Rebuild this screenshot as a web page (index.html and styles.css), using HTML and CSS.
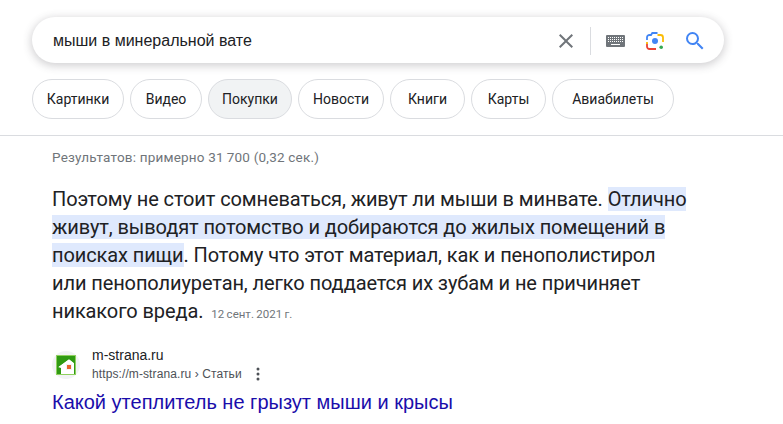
FILE: index.html
```html
<!DOCTYPE html>
<html lang="ru">
<head>
<meta charset="utf-8">
<title>мыши в минеральной вате</title>
<link rel="stylesheet" href="styles.css">
</head>
<body>
<header class="header">
  <div class="search">
    <span class="query">мыши в минеральной вате</span>
    <div class="tools">
      <svg class="clear" width="24" height="24" viewBox="0 0 24 24"><path fill="#70757a" d="M19 6.41 17.59 5 12 10.59 6.41 5 5 6.41 10.59 12 5 17.59 6.41 19 12 13.41 17.59 19 19 17.59 13.41 12z"/></svg>
      <span class="divider"></span>
      <svg class="keyboard" width="19" height="12" viewBox="0 0 19 12"><rect width="19" height="12" fill="#70757a" rx="1"/><path stroke="#fff" stroke-width="1" stroke-dasharray="1 1" d="M2 2.5h15M2 4.5h15M2 6.5h15"/><path stroke="#fff" d="M5 9.5h9"/></svg>
      <svg class="lens" width="18" height="18" viewBox="0 0 18 18"><circle cx="9" cy="9" r="3" fill="#4285f4"/><circle cx="15.2" cy="15.2" r="1.8" fill="#34a853"/><path fill="none" stroke="#4285f4" stroke-width="1.8" d="M1 8V5.500A2.500 2.500 0 0 1 3.500 3H5L6.300 1h5.200"/><path fill="none" stroke="#fbbc04" stroke-width="1.8" d="M11.500 3h3A2.500 2.500 0 0 1 17 5.500V10"/><path fill="none" stroke="#ea4335" stroke-width="1.8" d="M1 11.500V14.500A2.500 2.500 0 0 0 3.500 17H10"/><path fill="none" stroke="#fbbc04" stroke-width="1.8" d="M1 10v2"/></svg>
      <svg class="magnifier" width="24" height="24" viewBox="0 0 24 24"><path fill="#4285f4" d="M15.500 14h-.79l-.28-.27A6.470 6.470 0 0 0 16 9.500 6.500 6.500 0 1 0 9.500 16c1.610 0 3.090-.59 4.230-1.570l.27.28v.79l5 4.990L20.490 19l-4.990-5zm-6 0C7.010 14 5 11.990 5 9.500S7.010 5 9.500 5 14 7.010 14 9.500 11.990 14 9.500 14z"/></svg>
    </div>
  </div>
  <nav class="chips">
    <a class="chip chip-kartinki">Картинки</a>
    <a class="chip chip-video">Видео</a>
    <a class="chip chip-active">Покупки</a>
    <a class="chip chip-news">Новости</a>
    <a class="chip chip-books">Книги</a>
    <a class="chip chip-maps">Карты</a>
    <a class="chip chip-flights">Авиабилеты</a>
  </nav>
</header>
<main class="main">
  <p class="stats">Результатов: примерно 31&#8201;700 (0,32 сек.)</p>
  <p class="snippet">Поэтому не стоит сомневаться, живут ли мыши в минвате. <mark class="hl">Отлично живут, выводят потомство и добираются до жилых помещений в поисках пищи</mark>. Потому что этот материал, как и пенополистирол или пенополиуретан, легко поддается их зубам и не причиняет никакого вреда.<span class="date">12 сент. 2021&#8201;г.</span></p>
  <div class="source">
    <span class="favicon"><svg width="20" height="20" viewBox="0 0 20 20"><rect width="20" height="20" fill="#8fd05f"/><rect x="1" y="1" width="18" height="18" fill="#2f9a12"/><path fill="#fff" d="M2 12 13 4l5 4v11H5v-6z"/><path fill="#2f9a12" d="M2 12 13 4l6 4.500v-1L13 3 2 10.500z"/><rect x="10" y="9" width="6" height="6" fill="#f2f2f2"/><rect x="11" y="10" width="4" height="4" fill="#e8622c"/></svg></span>
    <div class="site">
      <div class="site-name">m-strana.ru</div>
      <div class="site-url"><span>https://m-strana.ru</span><span class="crumb"> › Статьи</span>
        <svg class="more" width="4" height="14" viewBox="0 0 4 14"><circle cx="2" cy="2" r="1.500"/><circle cx="2" cy="7" r="1.500"/><circle cx="2" cy="12" r="1.500"/></svg>
      </div>
    </div>
  </div>
  <a class="title">Какой утеплитель не грызут мыши и крысы</a>
</main>
</body>
</html>
```

FILE: styles.css
```css
html, body { margin: 0; padding: 0; background: #fff; overflow: hidden; }
body { width: 783px; height: 424px; font-family: Roboto, "Liberation Sans", sans-serif; color: #202124; }
.header { padding: 17px 0 0 32px; height: 118px; border-bottom: 1px solid #dadce0; }
.search { width: 692px; height: 46px; box-sizing: border-box; padding: 1px 17px 0 21px; border-radius: 24px; background: #fff; box-shadow: 0 2px 8px 1px rgba(64,60,67,.24); display: flex; align-items: center; justify-content: space-between; }
.query { font-size: 16px; font-family: "Liberation Sans", Arial, sans-serif; color: #202124; }
.tools { display: flex; align-items: center; }
.clear { margin-right: 12px; }
.divider { width: 1px; height: 28px; background: #dadce0; margin-right: 15px; }
.keyboard { margin-right: 21px; }
.lens { margin-right: 19px; }
.chips { display: flex; gap: 6px; margin-top: 16px; }
.chip { box-sizing: border-box; height: 40px; display: flex; align-items: center; justify-content: center; border: 1px solid #dadce0; border-radius: 20px; font-size: 14px; color: #202124; }
.chip-kartinki { width: 92px; }
.chip-video { width: 72px; }
.chip-active { width: 84px; background: #f1f3f4; }
.chip-news { width: 86px; }
.chip-books { width: 75px; }
.chip-maps { width: 75px; }
.chip-flights { width: 122px; }
.main { padding: 14px 0 0 52px; }
.stats { margin: 0; font-size: 13.5px; line-height: 15px; letter-spacing: .2px; color: #70757a; }
.snippet { margin: 20px 0 0; width: 638px; font-size: 20px; line-height: 28px; letter-spacing: -.1px; color: #202124; }
.hl { color: inherit; background: #dfe9fd; }
.date { font-size: 11.5px; letter-spacing: 0; word-spacing: -.5px; color: #70757a; margin-left: 8px; }
.source { display: flex; align-items: center; margin-top: 18px; }
.favicon { width: 28px; height: 28px; border-radius: 50%; background: #f1f3f4; display: flex; align-items: center; justify-content: center; margin-right: 12px; }
.site-name { font-size: 14px; line-height: 19px; font-family: "Liberation Sans", Arial, sans-serif; color: #202124; }
.site-url { display: flex; align-items: center; font-size: 12px; line-height: 18px; letter-spacing: .1px; font-family: "Liberation Sans", Arial, sans-serif; color: #4d5156; white-space: pre; }
.more { margin-left: 14px; fill: #4d5156; }
.title { display: block; margin-top: 6px; font-size: 20px; line-height: 26px; font-family: "Liberation Sans", Arial, sans-serif; color: #1a0dab; }
```
